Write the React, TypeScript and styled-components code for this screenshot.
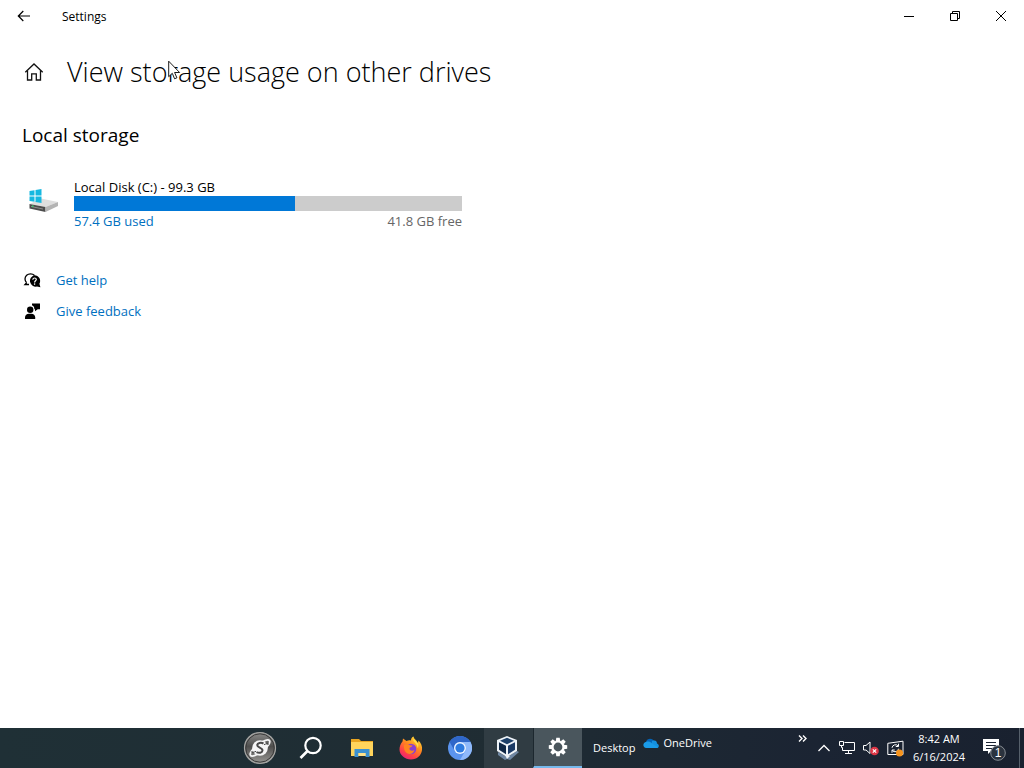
import React from "react";
import styled, { createGlobalStyle } from "styled-components";

const GlobalStyle = createGlobalStyle`
  *, *::before, *::after { box-sizing: border-box; }
  body {
    margin: 0;
    background: #ffffff;
    color: #000000;
    font-family: "Open Sans", "Noto Sans", sans-serif;
    font-size: 13px;
    line-height: 18px;
  }
`;

const Screen = styled.div`
  display: flex;
  flex-direction: column;
  min-height: 100vh;
`;

const TitleBar = styled.header`
  display: flex;
  align-items: center;
  height: 32px;
`;

const CaptionButton = styled.button<{ $width: number }>`
  display: flex;
  align-items: center;
  justify-content: center;
  width: ${(p) => p.$width}px;
  height: 32px;
  padding: 0;
  border: 0;
  background: transparent;
  color: #000000;
`;

const WindowName = styled.span`
  margin-left: 14px;
  padding-top: 2px;
  font-size: 12px;
`;

const CaptionButtons = styled.div`
  display: flex;
  margin-left: auto;
`;

const Content = styled.main`
  flex: 1;
  padding: 20px 22px;
`;

const PageHeading = styled.div`
  display: flex;
  align-items: center;
  gap: 22px;
`;

const HomeButton = styled.button`
  display: flex;
  padding: 0 0 0 1px;
  border: 0;
  background: transparent;
`;

const PageTitle = styled.h1`
  margin: 0;
  font-size: 27px;
  font-weight: 300;
  line-height: 40px;
`;

const SectionTitle = styled.h2`
  margin: 29px 0 0;
  font-size: 19px;
  font-weight: 400;
  line-height: 28px;
`;

const Drive = styled.section`
  display: flex;
  gap: 14px;
  max-width: 440px;
  margin-top: 29px;
  padding-left: 6px;
`;

const DriveIcon = styled.div`
  display: flex;
  align-items: center;
  width: 32px;
  height: 44px;
`;

const DriveBody = styled.div`
  flex: 1;
`;

const DriveName = styled.div`
  line-height: 18px;
`;

const Meter = styled.div`
  height: 15px;
  background: #cccccc;
`;

const MeterFill = styled.div`
  height: 100%;
  background: #0078d7;
`;

const DriveFigures = styled.div`
  display: flex;
  justify-content: space-between;
  line-height: 20px;
`;

const UsedText = styled.span`
  color: #0070c0;
`;

const FreeText = styled.span`
  color: #666666;
`;

const SupportLinks = styled.nav`
  display: flex;
  flex-direction: column;
  gap: 11px;
  margin-top: 39px;
  padding-left: 1px;
`;

const SupportLink = styled.a`
  display: flex;
  align-items: center;
  gap: 15px;
  height: 20px;
  color: #0070c0;
  text-decoration: none;
`;

const Taskbar = styled.footer`
  display: flex;
  height: 40px;
  padding-left: 235px;
  background: linear-gradient(90deg, #1f3036 0%, #1f2c33 50%, #1b2433 80%, #19212f 100%);
  color: #ffffff;
  font-size: 11px;
`;

const TaskButton = styled.button<{ $width?: number; $state?: "open" | "active" }>`
  display: flex;
  align-items: center;
  justify-content: center;
  width: ${(p) => p.$width ?? 49}px;
  padding: 0;
  border: 0;
  border-left: ${(p) => (p.$state === "active" ? "1px solid #1c272e" : "0")};
  border-bottom: ${(p) => (p.$state === "active" ? "2px solid #76b9ed" : "0")};
  background: ${(p) =>
    p.$state === "active" ? "#4a565d" : p.$state === "open" ? "#303c43" : "transparent"};
`;

const DesktopToolbar = styled.div`
  display: flex;
  align-items: center;
  gap: 8px;
  padding-left: 11px;
`;

const DesktopItem = styled.a`
  display: flex;
  align-items: center;
  gap: 4px;
  height: 30px;
  align-self: flex-start;
  color: #ffffff;
  text-decoration: none;
`;

const Tray = styled.div`
  display: flex;
  align-items: center;
  margin-left: auto;
`;

const TrayButton = styled.button<{ $width: number; $top?: boolean }>`
  display: flex;
  align-items: center;
  justify-content: center;
  align-self: ${(p) => (p.$top ? "flex-start" : "center")};
  width: ${(p) => p.$width}px;
  height: ${(p) => (p.$top ? 20 : 40)}px;
  padding: 0;
  border: 0;
  background: transparent;
`;

const Clock = styled.time`
  width: 64px;
  text-align: center;
  line-height: 18px;
`;

const ShowDesktop = styled.button`
  width: 5px;
  height: 40px;
  padding: 0;
  border: 0;
  border-left: 1px solid #56606b;
  background: transparent;
`;

const Pointer = styled.svg`
  position: absolute;
  left: 168px;
  top: 60px;
  pointer-events: none;
`;

const BackIcon = () => (
  <svg width="14" height="12" viewBox="0 0 14 12" fill="none" stroke="#000" strokeWidth="1.2">
    <path d="M13 6H1.3M6.3 1 1.3 6l5 5" />
  </svg>
);

const MinimizeIcon = () => (
  <svg width="10" height="10" viewBox="0 0 10 10">
    <path d="M0 5h10v1H0z" />
  </svg>
);

const RestoreIcon = () => (
  <svg width="10" height="10" viewBox="0 0 10 10" fill="none" stroke="#000">
    <path d="M.5 2.5h7v7h-7zM2.5 2.5v-2h7v7h-2" />
  </svg>
);

const CloseIcon = () => (
  <svg width="10" height="10" viewBox="0 0 10 10" fill="none" stroke="#000">
    <path d="m0 0 10 10M10 0 0 10" />
  </svg>
);

const HomeIcon = () => (
  <svg width="22" height="20" viewBox="0 0 22 20" fill="none" stroke="#111" strokeWidth="1.3">
    <path d="M2.3 10.300 11 2l8.700 8.300" />
    <path d="M4.500 8.500v9.500h4.200v-6.200h4.600V18h4.200V8.500" />
  </svg>
);

const DiskIcon = () => (
  <svg width="32" height="28" viewBox="0 0 32 28">
    <path d="M1.500 18 13 12.500l17 3.500-12.500 5z" fill="#dedede" />
    <path d="m1.500 18 16 3v5l-16-3.500z" fill="#4c4c4c" />
    <path d="M17.500 21 30 16v4l-12.500 6z" fill="#b4b4b4" />
    <path d="m3 20 12 2.500v1L3 21z" fill="#8c8c8c" />
    <path d="M4 19.500h1.500V21H4z" fill="#3fd06c" />
    <path d="m1.500 5 5-.8v5.300h-5zM7.500 4l6-1v6.500h-6zM1.500 10.500h5v5.300l-5-.8zM7.500 10.500h6V17l-6-1z" fill="#16b8e0" />
  </svg>
);

const HelpIcon = () => (
  <svg width="18" height="18" viewBox="0 0 18 18">
    <path
      d="M3.600 11.800A5.600 5.600 0 0 1 2 8c0-3 2.500-5.200 5.500-5.200 1.700 0 3 .6 4 1.700M3.600 11.800 2 13.500h4"
      fill="none"
      stroke="#000"
      strokeWidth="1.3"
    />
    <path d="M11.500 4.200a5.700 5.700 0 0 1 4.900 8.500l1 3.600-3.400-.8A5.700 5.700 0 1 1 11.500 4.200z" />
    <path d="M9.800 8.700c.2-2.300 3.500-2.200 3.500-.2 0 1.300-1.700 1.300-1.700 3" fill="none" stroke="#fff" strokeWidth="1.2" />
    <circle cx="11.600" cy="13.100" r=".8" fill="#fff" />
  </svg>
);

const FeedbackIcon = () => (
  <svg width="18" height="18" viewBox="0 0 18 18">
    <circle cx="7.200" cy="7.700" r="3.200" />
    <path d="M2 17v-1.500c0-2.300 1.700-3.700 4-3.700h2.300c2.300 0 3.900 1.400 3.900 3.700V17z" />
    <path d="M9 1.500h8v5.800h-2.300L12 9.300v-2h-.7C11.500 5.300 10.700 4 9 3.300z" />
  </svg>
);

const StartIcon = () => (
  <svg width="34" height="34" viewBox="0 0 34 34">
    <defs>
      <linearGradient id="orb" x1="0" y1="0" x2="0" y2="1">
        <stop offset="0" stopColor="#8d8d8b" />
        <stop offset=".45" stopColor="#4e4e4d" />
        <stop offset="1" stopColor="#9b9995" />
      </linearGradient>
    </defs>
    <circle cx="17" cy="17" r="15.500" fill="url(#orb)" stroke="#a5a5a3" strokeWidth="1.2" />
    <circle cx="17" cy="17" r="14.200" fill="none" stroke="#3c3c3c" strokeWidth="1" />
    <ellipse cx="17" cy="17" rx="12" ry="4" fill="none" stroke="#f5f5f5" strokeWidth="1.8" transform="rotate(-38 17 17)" />
    <circle cx="17" cy="17" r="7.800" fill="#f5f5f5" />
    <path d="M20.500 12.500c-2.500-1.300-6-.6-6.300 1.500-.3 2.500 5.500 2.700 5.300 5.500-.2 2.300-3.500 3-6 1.700" fill="none" stroke="#4a4a4a" strokeWidth="2" />
    <path d="M8 20.500c.8 1.500 3 .8 5-.2M26 13.500c-.8-1.500-3-.8-5 .2" fill="none" stroke="#4a4a4a" strokeWidth="1" />
  </svg>
);

const SearchIcon = () => (
  <svg width="24" height="24" viewBox="0 0 24 24" fill="none" stroke="#fff" strokeWidth="2.200">
    <circle cx="14" cy="9.500" r="7.700" />
    <path d="m8.500 15-7 7" strokeWidth="2.600" />
  </svg>
);

const ExplorerIcon = () => (
  <svg width="22" height="20" viewBox="0 0 22 20">
    <path d="M0 1h8l2 2h12v4H0z" fill="#e9a521" />
    <path d="M0 4h22v14H0z" fill="#ffd45c" />
    <path d="M3.500 11h15v8h-4v-4h-7v4h-4z" fill="#3c91d0" />
    <path d="M7.500 15h7v3h-7z" fill="#ffe28a" />
  </svg>
);

const FirefoxIcon = () => (
  <svg width="24" height="24" viewBox="0 0 24 24">
    <defs>
      <linearGradient id="fox" x1=".8" y1="0" x2=".2" y2="1">
        <stop offset="0" stopColor="#ffe33b" />
        <stop offset=".4" stopColor="#ff8a1f" />
        <stop offset=".75" stopColor="#ff3c4b" />
        <stop offset="1" stopColor="#e5207d" />
      </linearGradient>
    </defs>
    <path d="M3.500 5.500 4 2.500 7.500 5c1.500-.7 3-.8 4.500-.5C12 2.500 13 1 14.500.5c.3 2.500 3 3.500 4.500 6.500l.5-2.500C22 7 23.500 10 23 14c-.7 5.500-5 9.500-11 9.500S.5 19 .5 13.500c0-3 1-6 3-8z" fill="url(#fox)" />
    <circle cx="12" cy="13" r="5.300" fill="#8a3fd0" />
    <path d="M5 9c2.500-1.500 4.500-.6 6 .3l2.500.2c-.3 1.500-2.500 1.800-3 2.500-.5 2.500 2.500 3.500 5 2-1 3.500-4.500 5-7.500 3.300C5.500 15.700 4.500 12 5 9z" fill="#ff8420" />
    <path d="M14 3c0 3 4.500 4.500 4.500 9 1-1 1-2.500.8-4L16 4z" fill="#ffe04a" />
  </svg>
);

const ChromiumIcon = () => (
  <svg width="24" height="24" viewBox="0 0 24 24">
    <circle cx="12" cy="12" r="12" fill="#5b94ee" />
    <path d="M1.600 6A12 12 0 0 1 22.400 6H12a6 6 0 0 0-5.200 9z" fill="#2f67c9" />
    <path d="M22.400 6A12 12 0 0 1 12 24l5.200-9A6 6 0 0 0 12 6z" fill="#8fb9fa" />
    <circle cx="12" cy="12" r="6" fill="#eef5ff" />
    <circle cx="12" cy="12" r="4.600" fill="#2e7be0" />
  </svg>
);

const VirtualBoxIcon = () => (
  <svg width="28" height="26" viewBox="0 0 28 26">
    <path d="m3 17 9 5 10-6 2 1-9 8-3-1-2 1-7-5z" fill="#6f87a3" />
    <path d="m12 1 10 4v11l-10 6-10-6V5z" fill="#eef3f8" />
    <path d="m12 2.700 7 3-7 3.500-7-3.500z" fill="#1c3f68" />
    <path d="m4 7.200 7 3.600v8.400l-7-4.400z" fill="#0f2745" />
    <path d="m20 7.200-7 3.600v8.400l7-4.400z" fill="#1b3b66" />
    <path d="m10 20 2 4 3-3z" fill="#eef3f8" />
  </svg>
);

const GearIcon = () => (
  <svg width="20" height="20" viewBox="0 0 20 20">
    <circle cx="10" cy="10" r="5.500" fill="none" stroke="#fff" strokeWidth="2.200" />
    {[0, 45, 90, 135, 180, 225, 270, 315].map((a) => (
      <path key={a} d="M8.300.8h3.400l.5 3.200H7.800z" fill="#fff" transform={`rotate(${a} 10 10)`} />
    ))}
  </svg>
);

const OneDriveIcon = () => (
  <svg width="16" height="12" viewBox="0 0 16 12">
    <path d="M3 5C4 1.500 8.500.5 11 4l-6 6H3z" fill="#0364b8" />
    <path d="M9 4c4-1.500 5 1 5 2.500 2.500.8 2.500 4.500-.5 4.500H8z" fill="#1490df" />
    <path d="M3.500 4.700C7 4 8 6 15 10c-.5.700-1 1-2 1H3.300C-.5 11-.8 5.500 3.500 4.700z" fill="#1a9be8" />
  </svg>
);

const MoreIcon = () => (
  <svg width="9" height="7" viewBox="0 0 9 7" fill="none" stroke="#fff" strokeWidth="1.400">
    <path d="m1 .5 3 3-3 3M5 .5l3 3-3 3" />
  </svg>
);

const ChevronUpIcon = () => (
  <svg width="12" height="8" viewBox="0 0 12 8" fill="none" stroke="#fff" strokeWidth="1.300">
    <path d="m.5 7 5.500-5.500L11.500 7" />
  </svg>
);

const NetworkIcon = () => (
  <svg width="16" height="16" viewBox="0 0 16 16" fill="none" stroke="#fff">
    <path d="M5.500 2.500h10v8h-12v-3M9.500 10.500v3M6 13.500h7M.5 1.500h4v4h-4zM2.500 5.500v2h1" />
  </svg>
);

const VolumeMutedIcon = () => (
  <svg width="16" height="16" viewBox="0 0 16 16">
    <path d="M.5 5.500h2.500l4-3.500v11.500L3 10H.5z" fill="none" stroke="#fff" />
    <circle cx="11.500" cy="11" r="4.300" fill="#dc3545" />
    <path d="m9.800 9.300 3.400 3.400M13.200 9.300l-3.400 3.400" stroke="#fff" strokeWidth="1.200" />
  </svg>
);

const SyncIcon = () => (
  <svg width="17" height="17" viewBox="0 0 17 17" fill="none" stroke="#fff">
    <path d="M.8 3.300 16 1.200v13.300H.8z" />
    <path d="M5 7.800A3.600 3.600 0 0 1 11.300 6M11.500 3.700v2.800H8.800" />
    <path d="M11.600 8.700A3.600 3.600 0 0 1 5.300 10.500M5 12.800V10h2.700" />
    <circle cx="12.500" cy="13" r="3.500" fill="#f7941d" stroke="none" />
  </svg>
);

const NoticeIcon = () => (
  <svg width="26" height="26" viewBox="0 0 26 26">
    <path d="M1 4h16v12h-8l-3 3v-3H1z" fill="#fff" />
    <path d="M4 7.500h10M4 10.500h10M4 13.500h6" stroke="#1b2433" />
    <circle cx="16" cy="18" r="7.300" fill="#2b333e" stroke="#858b92" />
    <text x="16" y="22" textAnchor="middle" fontSize="12" fill="#fff">
      1
    </text>
  </svg>
);

export default function App() {
  const usedPercent = 57;

  return (
    <Screen>
      <GlobalStyle />
      <TitleBar>
        <CaptionButton $width={48} aria-label="Back">
          <BackIcon />
        </CaptionButton>
        <WindowName>Settings</WindowName>
        <CaptionButtons>
          <CaptionButton $width={46} aria-label="Minimize">
            <MinimizeIcon />
          </CaptionButton>
          <CaptionButton $width={46} aria-label="Restore">
            <RestoreIcon />
          </CaptionButton>
          <CaptionButton $width={46} aria-label="Close">
            <CloseIcon />
          </CaptionButton>
        </CaptionButtons>
      </TitleBar>

      <Content>
        <PageHeading>
          <HomeButton aria-label="Home">
            <HomeIcon />
          </HomeButton>
          <PageTitle>View storage usage on other drives</PageTitle>
        </PageHeading>

        <SectionTitle>Local storage</SectionTitle>

        <Drive>
          <DriveIcon>
            <DiskIcon />
          </DriveIcon>
          <DriveBody>
            <DriveName>Local Disk (C:) - 99.3 GB</DriveName>
            <Meter role="meter" aria-label="Space used" aria-valuenow={usedPercent} aria-valuemin={0} aria-valuemax={100}>
              <MeterFill style={{ width: `${usedPercent}%` }} />
            </Meter>
            <DriveFigures>
              <UsedText>57.4 GB used</UsedText>
              <FreeText>41.8 GB free</FreeText>
            </DriveFigures>
          </DriveBody>
        </Drive>

        <SupportLinks>
          <SupportLink href="#help">
            <HelpIcon />
            Get help
          </SupportLink>
          <SupportLink href="#feedback">
            <FeedbackIcon />
            Give feedback
          </SupportLink>
        </SupportLinks>
      </Content>

      <Taskbar>
        <TaskButton $width={50} aria-label="Start">
          <StartIcon />
        </TaskButton>
        <TaskButton $width={52} aria-label="Search">
          <SearchIcon />
        </TaskButton>
        <TaskButton aria-label="File Explorer">
          <ExplorerIcon />
        </TaskButton>
        <TaskButton aria-label="Firefox">
          <FirefoxIcon />
        </TaskButton>
        <TaskButton aria-label="Chromium">
          <ChromiumIcon />
        </TaskButton>
        <TaskButton $state="open" aria-label="VirtualBox">
          <VirtualBoxIcon />
        </TaskButton>
        <TaskButton $state="active" aria-label="Settings">
          <GearIcon />
        </TaskButton>
        <DesktopToolbar>
          <span>Desktop</span>
          <DesktopItem href="#onedrive">
            <OneDriveIcon />
            OneDrive
          </DesktopItem>
        </DesktopToolbar>
        <Tray>
          <TrayButton $width={20} $top aria-label="More desktop items">
            <MoreIcon />
          </TrayButton>
          <TrayButton $width={23} aria-label="Show hidden icons">
            <ChevronUpIcon />
          </TrayButton>
          <TrayButton $width={24} aria-label="Network">
            <NetworkIcon />
          </TrayButton>
          <TrayButton $width={24} aria-label="Volume muted">
            <VolumeMutedIcon />
          </TrayButton>
          <TrayButton $width={24} aria-label="Updates">
            <SyncIcon />
          </TrayButton>
          <Clock dateTime="2024-06-16T08:42">
            8:42 AM
            <br />
            6/16/2024
          </Clock>
          <TrayButton $width={48} aria-label="Notifications">
            <NoticeIcon />
          </TrayButton>
          <ShowDesktop aria-label="Show desktop" />
        </Tray>
      </Taskbar>

      <Pointer width="13" height="20" viewBox="0 0 13 20" aria-hidden="true">
        <path d="M.7 1.200v15.500l3.600-3.400 2.300 5.500 2.300-1-2.300-5.300h5z" fill="#fff" stroke="#000" strokeWidth=".9" />
      </Pointer>
    </Screen>
  );
}
